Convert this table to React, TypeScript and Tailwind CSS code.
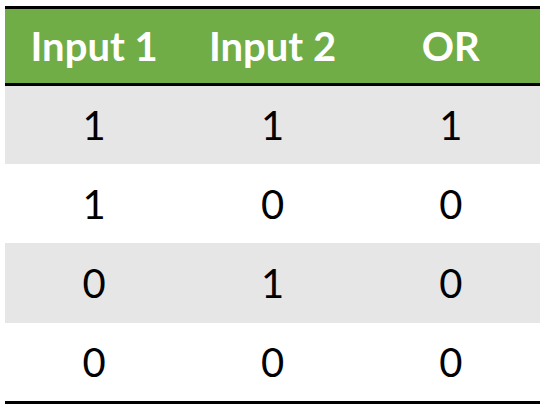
const rows = [
  ['1', '1', '1'],
  ['1', '0', '0'],
  ['0', '1', '0'],
  ['0', '0', '0'],
];

const heights = ['h-[78px]', 'h-[79px]', 'h-[80px]', 'h-[78px]'];

export default function App() {
  return (
    <div className="h-[412px] w-[545px] bg-white pt-[6px] pl-[5px]" style={{fontFamily: 'Lato, "Open Sans", sans-serif'}}>
      <div className="w-[535px] border-y-[3px] border-black">
        <div className="grid h-[77px] grid-cols-3 items-center border-b-[3px] border-black bg-[#70ad47] text-center text-[40px] font-bold text-white">
          <div>Input 1</div>
          <div>Input 2</div>
          <div>OR</div>
        </div>
        {rows.map((r, i) => (
          <div
            key={i}
            className={`grid grid-cols-3 items-center text-center text-[40px] text-black ${heights[i]} ${i % 2 === 0 ? 'bg-[#e7e6e6]' : 'bg-white'}`}
          >
            {r.map((v, j) => (
              <div key={j}>{v}</div>
            ))}
          </div>
        ))}
      </div>
    </div>
  );
}
